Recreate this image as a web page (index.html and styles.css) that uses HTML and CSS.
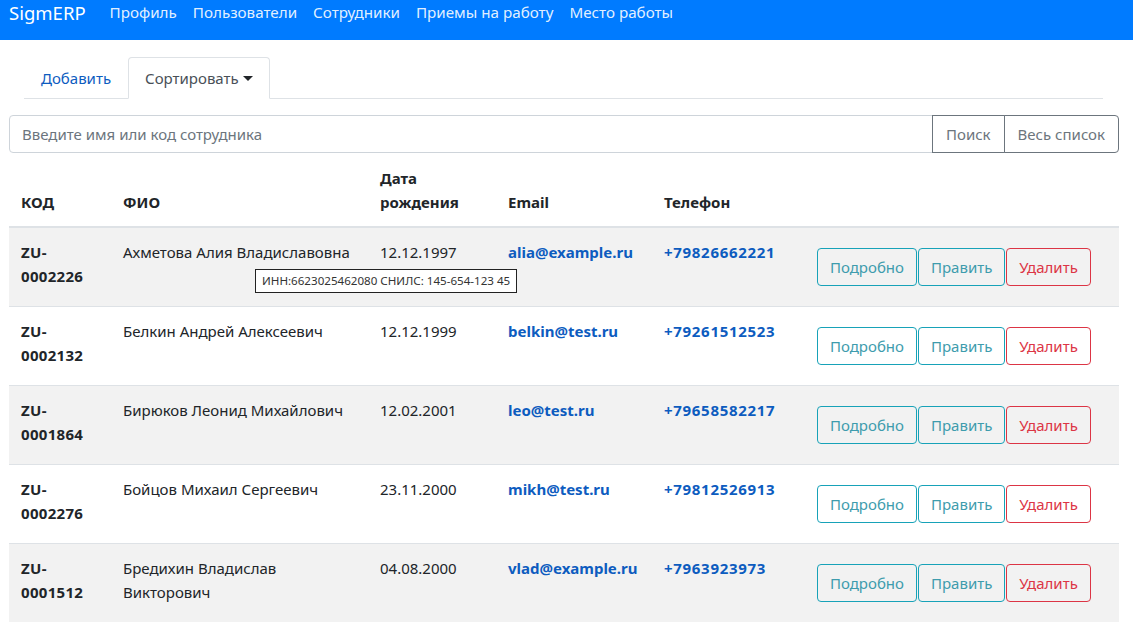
FILE: index.html
```html
<!DOCTYPE html>
<html lang="ru">
<head>
<meta charset="utf-8">
<title>SigmERP</title>
<link rel="stylesheet" href="styles.css">
</head>
<body>
<nav class="navbar">
  <a class="brand" href="#">SigmERP</a>
  <a class="nav-link" href="#">Профиль</a>
  <a class="nav-link" href="#">Пользователи</a>
  <a class="nav-link" href="#">Сотрудники</a>
  <a class="nav-link" href="#">Приемы на работу</a>
  <a class="nav-link" href="#">Место работы</a>
</nav>
<main class="page">
  <ul class="tabs">
    <li class="tab"><a href="#">Добавить</a></li>
    <li class="tab active"><a href="#">Сортировать<span class="caret"></span></a></li>
  </ul>
  <form class="search">
    <input class="search-input" type="text" placeholder="Введите имя или код сотрудника">
    <button class="btn-sec" type="button">Поиск</button>
    <button class="btn-sec last" type="button">Весь список</button>
  </form>
  <table class="table">
    <thead>
      <tr>
        <th class="c-code">КОД</th>
        <th class="c-name">ФИО</th>
        <th class="c-date">Дата рождения</th>
        <th class="c-mail">Email</th>
        <th class="c-phone">Телефон</th>
        <th class="c-act"></th>
      </tr>
    </thead>
    <tbody>
      <tr class="odd">
        <td class="code">ZU-<br>0002226</td>
        <td class="name">Ахметова Алия Владиславовна<span class="tooltip">ИНН:6623025462080 СНИЛС: 145-654-123 45</span></td>
        <td>12.12.1997</td>
        <td><a class="lnk" href="#">alia@example.ru</a></td>
        <td><a class="lnk phone" href="#">+79826662221</a></td>
        <td class="act"><div class="btns"><a class="btn info" href="#">Подробно</a><a class="btn info" href="#">Править</a><a class="btn danger" href="#">Удалить</a></div></td>
      </tr>
      <tr>
        <td class="code">ZU-<br>0002132</td>
        <td class="name">Белкин Андрей Алексеевич</td>
        <td>12.12.1999</td>
        <td><a class="lnk" href="#">belkin@test.ru</a></td>
        <td><a class="lnk phone" href="#">+79261512523</a></td>
        <td class="act"><div class="btns"><a class="btn info" href="#">Подробно</a><a class="btn info" href="#">Править</a><a class="btn danger" href="#">Удалить</a></div></td>
      </tr>
      <tr class="odd">
        <td class="code">ZU-<br>0001864</td>
        <td class="name">Бирюков Леонид Михайлович</td>
        <td>12.02.2001</td>
        <td><a class="lnk" href="#">leo@test.ru</a></td>
        <td><a class="lnk phone" href="#">+79658582217</a></td>
        <td class="act"><div class="btns"><a class="btn info" href="#">Подробно</a><a class="btn info" href="#">Править</a><a class="btn danger" href="#">Удалить</a></div></td>
      </tr>
      <tr>
        <td class="code">ZU-<br>0002276</td>
        <td class="name">Бойцов Михаил Сергеевич</td>
        <td>23.11.2000</td>
        <td><a class="lnk" href="#">mikh@test.ru</a></td>
        <td><a class="lnk phone" href="#">+79812526913</a></td>
        <td class="act"><div class="btns"><a class="btn info" href="#">Подробно</a><a class="btn info" href="#">Править</a><a class="btn danger" href="#">Удалить</a></div></td>
      </tr>
      <tr class="odd">
        <td class="code">ZU-<br>0001512</td>
        <td class="name">Бредихин Владислав<br>Викторович</td>
        <td>04.08.2000</td>
        <td><a class="lnk" href="#">vlad@example.ru</a></td>
        <td><a class="lnk phone" href="#">+7963923973</a></td>
        <td class="act"><div class="btns"><a class="btn info" href="#">Подробно</a><a class="btn info" href="#">Править</a><a class="btn danger" href="#">Удалить</a></div></td>
      </tr>
    </tbody>
  </table>
</main>
</body>
</html>
```
FILE: styles.css
```css
* { box-sizing: border-box; }
html, body { margin: 0; padding: 0; }
body {
  font-family: "Noto Sans", "Open Sans", "DejaVu Sans", sans-serif;
  font-size: 15px;
  line-height: 24px;
  color: #212529;
  background: #fff;
}
a { text-decoration: none; }

.navbar {
  height: 40px;
  background: #007bff;
  display: flex;
  align-items: flex-start;
  padding: 0 0 0 9px;
}
.brand {
  color: #fff;
  font-size: 18.5px;
  line-height: 25px;
  margin-right: 24px;
}
.nav-link {
  color: rgba(255,255,255,0.9);
  font-size: 15.2px;
  line-height: 25px;
  margin-right: 16px;
}

.page { padding: 0 14px 0 9px; }

.tabs {
  list-style: none;
  margin: 17px 16px 16px 15px;
  padding: 0;
  display: flex;
  border-bottom: 1px solid #dee2e6;
}
.tab a {
  display: block;
  padding: 8px 16px;
  border: 1px solid transparent;
  border-radius: 4px 4px 0 0;
  margin-bottom: -1px;
  color: #0d5cbf;
}
.tab.active a {
  color: #495057;
  border-color: #dee2e6 #dee2e6 #fff;
  background: #fff;
}
.caret {
  display: inline-block;
  margin-left: 4px;
  vertical-align: 3px;
  border-top: 5px solid #212529;
  border-left: 5px solid transparent;
  border-right: 5px solid transparent;
}

.search {
  display: flex;
  height: 38px;
  margin: 0;
}
.search-input {
  flex: 1;
  height: 38px;
  border: 1px solid #ced4da;
  border-radius: 4px 0 0 4px;
  padding: 6px 12px;
  font: inherit;
  color: #495057;
}
.search-input::placeholder { color: #6c757d; }
.btn-sec {
  height: 38px;
  font: inherit;
  color: #6c757d;
  background: #fff;
  border: 1px solid #6c757d;
  padding: 6px 13px;
  margin-left: -1px;
}
.btn-sec.last { border-radius: 0 4px 4px 0; }

.table {
  width: 100%;
  border-collapse: collapse;
  margin-top: 1px;
}
.table th {
  text-align: left;
  vertical-align: bottom;
  font-weight: 700;
  padding: 12px;
  border-bottom: 2px solid #dee2e6;
}
.table td {
  vertical-align: top;
  padding: 12px;
  border-top: 1px solid #dee2e6;
}
.table tr.odd td { background: #f2f2f2; }
.c-code { width: 102px; }
.c-name { width: 257px; }
.c-date { width: 128px; }
.c-mail { width: 156px; }
.c-phone { width: 153px; }
.code { font-weight: 700; letter-spacing: 0.3px; }
.name { position: relative; }
.lnk { color: #0d5cbf; font-weight: 700; }
.phone { letter-spacing: 0.7px; }

.act { padding-top: 20px !important; padding-bottom: 20px !important; }
.btns { display: flex; gap: 1px; }
.btn {
  display: inline-block;
  height: 38px;
  padding: 6px 12px;
  border: 1px solid;
  border-radius: 4px;
  background: transparent;
}
.btn.info { color: #3e9cad; border-color: #17a2b8; }
.btn.danger { color: #dc3545; border-color: #dc3545; }

.tooltip {
  position: absolute;
  left: 144px;
  top: 41px;
  white-space: nowrap;
  font-size: 11.6px;
  line-height: 16px;
  color: #333;
  background: #fff;
  border: 1px solid #222;
  padding: 3px 6px;
  z-index: 2;
}
```
